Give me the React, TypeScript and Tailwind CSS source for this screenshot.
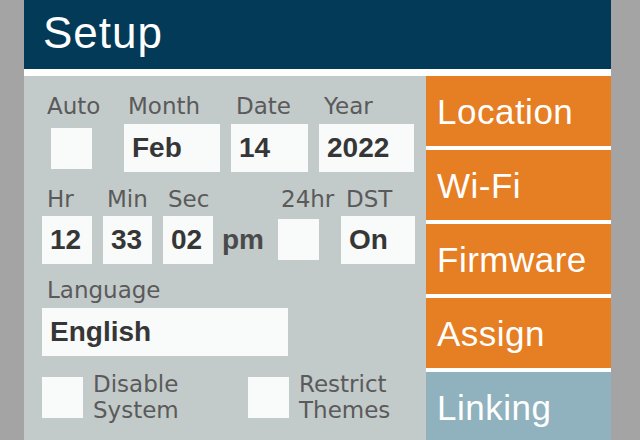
const labelFont = { fontFamily: '"DejaVu Sans", sans-serif' };

function Label({ text, pad }: { text: string; pad: string }) {
  return (
    <div className={`h-[23px] text-[23px] leading-[23px] text-[#5a5a5a] whitespace-nowrap ${pad}`} style={labelFont}>
      {text}
    </div>
  );
}

function Field({ value, width }: { value: string; width: string }) {
  return (
    <div className={`h-[48px] ${width} bg-[#f8fbf9] flex items-center pl-[8px] text-[28px] leading-none font-bold text-[#363636]`}>
      {value}
    </div>
  );
}

function Box() {
  return <div className="w-[41px] h-[41px] bg-[#f8fbf9]" />;
}

const menu = [
  { name: "Location", color: "bg-[#e67e23]" },
  { name: "Wi-Fi", color: "bg-[#e67e23]" },
  { name: "Firmware", color: "bg-[#e67e23]" },
  { name: "Assign", color: "bg-[#e67e23]" },
  { name: "Linking", color: "bg-[#8fb2be]" },
];

export default function App() {
  return (
    <div
      className="w-[640px] h-[440px] overflow-hidden bg-[#a4a4a4] pl-[24px]"
      style={{ fontFamily: '"Liberation Sans", Arial, sans-serif' }}
    >
      <div className="w-[587px] h-full flex flex-col bg-white">
        <div className="h-[69px] shrink-0 bg-[#023a57] text-white text-[44px] leading-none tracking-[1px] pl-[19px] pt-[11px]">
          Setup
        </div>

        <div className="mt-[7px] flex flex-1 min-h-0">
          <div className="w-[402px] bg-[#c3caca] pl-[18px] pt-[19px]">
            {/* date row */}
            <div className="flex items-start">
              <div className="w-[82px]">
                <Label text="Auto" pad="pl-[5px]" />
                <div className="mt-[10px] ml-[9px]">
                  <Box />
                </div>
              </div>
              <div className="w-[96px]">
                <Label text="Month" pad="pl-[4px]" />
                <div className="mt-[6px]">
                  <Field value="Feb" width="w-[96px]" />
                </div>
              </div>
              <div className="ml-[11px] w-[77px]">
                <Label text="Date" pad="pl-[5px]" />
                <div className="mt-[6px]">
                  <Field value="14" width="w-[77px]" />
                </div>
              </div>
              <div className="ml-[11px] w-[95px]">
                <Label text="Year" pad="pl-[5px]" />
                <div className="mt-[6px]">
                  <Field value="2022" width="w-[95px]" />
                </div>
              </div>
            </div>

            {/* time row */}
            <div className="mt-[16px] flex items-start">
              <div className="w-[50px]">
                <Label text="Hr" pad="pl-[5px]" />
                <div className="mt-[5px]">
                  <Field value="12" width="w-[50px]" />
                </div>
              </div>
              <div className="ml-[11px] w-[49px]">
                <Label text="Min" pad="pl-[4px]" />
                <div className="mt-[5px]">
                  <Field value="33" width="w-[49px]" />
                </div>
              </div>
              <div className="ml-[11px] w-[50px]">
                <Label text="Sec" pad="pl-[5px]" />
                <div className="mt-[5px]">
                  <Field value="02" width="w-[50px]" />
                </div>
              </div>
              <div className="w-[65px] pl-[9px] mt-[28px] h-[48px] flex items-center text-[28px] leading-none font-bold text-[#4a4a4a]">
                pm
              </div>
              <div className="w-[63px]">
                <Label text="24hr" pad="pl-[3px]" />
                <div className="mt-[8px]">
                  <Box />
                </div>
              </div>
              <div className="w-[74px]">
                <Label text="DST" pad="pl-[5px]" />
                <div className="mt-[5px]">
                  <Field value="On" width="w-[74px]" />
                </div>
              </div>
            </div>

            {/* language */}
            <div className="mt-[15px]">
              <Label text="Language" pad="pl-[5px]" />
              <div className="mt-[6px]">
                <Field value="English" width="w-[246px]" />
              </div>
            </div>

            {/* options */}
            <div className="mt-[15px] flex items-center">
              <div className="w-[206px] flex items-center gap-[10px]">
                <Box />
                <div className="text-[23px] leading-[26px] text-[#5a5a5a]" style={labelFont}>
                  Disable
                  <br />
                  System
                </div>
              </div>
              <div className="flex items-center gap-[10px]">
                <Box />
                <div className="text-[23px] leading-[26px] text-[#5a5a5a]" style={labelFont}>
                  Restrict
                  <br />
                  Themes
                </div>
              </div>
            </div>
          </div>

          <div className="flex-1 flex flex-col gap-[4px] bg-white">
            {menu.map((item) => (
              <div
                key={item.name}
                className={`h-[70px] shrink-0 ${item.color} flex items-center pl-[11px] text-[35px] leading-none tracking-[0.5px] text-white`}
              >
                {item.name}
              </div>
            ))}
          </div>
        </div>
      </div>
    </div>
  );
}
